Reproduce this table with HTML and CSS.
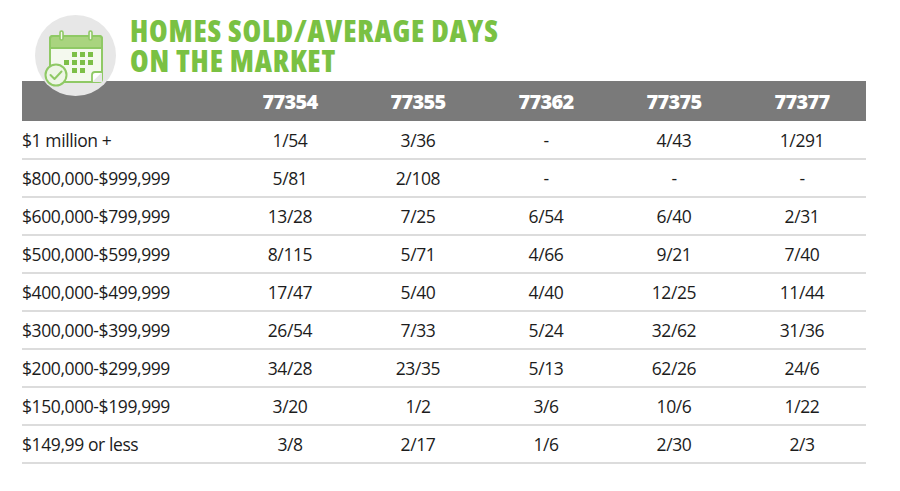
FILE: index.html
```html
<!DOCTYPE html>
<html lang="en">
<head>
<meta charset="utf-8">
<title>Homes Sold / Average Days on the Market</title>
<link rel="stylesheet" href="styles.css">
</head>
<body>
<div class="page">
  <div class="badge">
    <svg width="81" height="81" viewBox="0 0 81 81" aria-hidden="true">
      <circle cx="40.5" cy="40.5" r="40.5" fill="#e7e7e7"/>
      <!-- calendar body -->
      <rect x="15" y="21" width="52" height="46" rx="3" fill="#f4f9ee" stroke="#8fc965" stroke-width="2"/>
      <path d="M15 24 a3 3 0 0 1 3 -3 h46 a3 3 0 0 1 3 3 v9 h-52 z" fill="#a9d47f" stroke="#8fc965" stroke-width="2"/>
      <!-- rings -->
      <rect x="25" y="16" width="3" height="9" rx="1.5" fill="#f4f9ee" stroke="#8fc965" stroke-width="1.6"/>
      <rect x="54" y="16" width="3" height="9" rx="1.5" fill="#f4f9ee" stroke="#8fc965" stroke-width="1.6"/>
      <!-- grid -->
      <g fill="#7dbf48">
        <rect x="37" y="37" width="5" height="5"/>
        <rect x="45" y="37" width="5" height="5"/>
        <rect x="53" y="37" width="5" height="5"/>
        <rect x="37" y="45" width="5" height="5"/>
        <rect x="45" y="45" width="5" height="5"/>
        <rect x="53" y="45" width="5" height="5"/>
        <rect x="37" y="53" width="5" height="5"/>
        <rect x="45" y="53" width="5" height="5"/>
        <rect x="29" y="45" width="5" height="5"/>
      </g>
      <!-- folded corner -->
      <path d="M57 67 L67 57 L67 67 Z" fill="#e7e7e7"/>
      <path d="M57 67 L57 60 a3 3 0 0 1 3 -3 L67 57" fill="#ffffff" stroke="#8fc965" stroke-width="1.8"/>
      <!-- check circle -->
      <circle cx="21" cy="60" r="10.5" fill="#eef6e6" stroke="#8fc965" stroke-width="2"/>
      <path d="M15.5 60 L19.5 64 L26.5 56.5" fill="none" stroke="#8fc965" stroke-width="2" stroke-linecap="round" stroke-linejoin="round"/>
    </svg>
  </div>

  <h1 class="title"><span class="title-line">HOMES SOLD/AVERAGE DAYS</span><span class="title-line">ON THE MARKET</span></h1>

  <table class="grid">
    <colgroup>
      <col class="col-label">
      <col class="col-val"><col class="col-val"><col class="col-val"><col class="col-val"><col class="col-val">
    </colgroup>
    <thead>
      <tr>
        <th></th>
        <th>77354</th><th>77355</th><th>77362</th><th>77375</th><th>77377</th>
      </tr>
    </thead>
    <tbody>
      <tr><td>$1 million +</td><td>1/54</td><td>3/36</td><td>-</td><td>4/43</td><td>1/291</td></tr>
      <tr><td>$800,000-$999,999</td><td>5/81</td><td>2/108</td><td>-</td><td>-</td><td>-</td></tr>
      <tr><td>$600,000-$799,999</td><td>13/28</td><td>7/25</td><td>6/54</td><td>6/40</td><td>2/31</td></tr>
      <tr><td>$500,000-$599,999</td><td>8/115</td><td>5/71</td><td>4/66</td><td>9/21</td><td>7/40</td></tr>
      <tr><td>$400,000-$499,999</td><td>17/47</td><td>5/40</td><td>4/40</td><td>12/25</td><td>11/44</td></tr>
      <tr><td>$300,000-$399,999</td><td>26/54</td><td>7/33</td><td>5/24</td><td>32/62</td><td>31/36</td></tr>
      <tr><td>$200,000-$299,999</td><td>34/28</td><td>23/35</td><td>5/13</td><td>62/26</td><td>24/6</td></tr>
      <tr><td>$150,000-$199,999</td><td>3/20</td><td>1/2</td><td>3/6</td><td>10/6</td><td>1/22</td></tr>
      <tr><td>$149,99 or less</td><td>3/8</td><td>2/17</td><td>1/6</td><td>2/30</td><td>2/3</td></tr>
    </tbody>
  </table>
</div>
</body>
</html>
```

FILE: styles.css
```css
* { box-sizing: border-box; }

html, body {
  margin: 0;
  padding: 0;
  background: #ffffff;
}

body {
  font-family: "Open Sans", "DejaVu Sans", sans-serif;
  color: #1c1c1c;
}

.page {
  position: relative;
  width: 900px;
  height: 491px;
  padding: 16px 0 0 22px;
}

.badge {
  position: absolute;
  left: 35px;
  top: 15px;
  width: 81px;
  height: 81px;
  z-index: 2;
}

.badge svg { display: block; }

.title {
  display: flex;
  flex-direction: column;
  margin: 0 0 6px 108px;
  font-family: "Open Sans", "DejaVu Sans", sans-serif;
  font-weight: 800;
  font-stretch: 87.5%;
  font-size: 30px;
  line-height: 29.5px;
  letter-spacing: 0.8px;
  color: #7ac143;
}

.title-line {
  display: block;
  height: 29.5px;
}

.grid {
  width: 844px;
  border-collapse: collapse;
  table-layout: fixed;
}

.col-label { width: 204px; }
.col-val { width: 128px; }

.grid thead th {
  height: 40px;
  padding: 0;
  background: #7a7a7a;
  color: #ffffff;
  font-weight: 800;
  font-size: 20px;
  letter-spacing: -0.7px;
  text-align: center;
  vertical-align: middle;
}

.grid tbody td {
  height: 38px;
  padding: 0;
  border-bottom: 2px solid #dcdcdc;
  font-size: 17.5px;
  letter-spacing: -0.4px;
  text-align: center;
  vertical-align: middle;
  color: #1c1c1c;
}

.grid tbody td:first-child {
  text-align: left;
}
```
